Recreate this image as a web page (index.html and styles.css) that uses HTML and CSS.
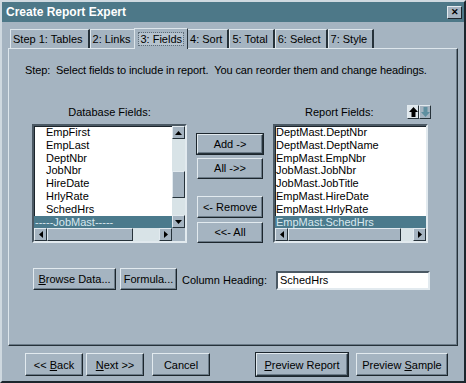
FILE: index.html
```html
<!DOCTYPE html>
<html lang="en">
<head>
    <meta charset="UTF-8">
    <title>Create Report Expert</title>
    <link rel="stylesheet" href="styles.css">
</head>
<body>
<div class="window">

    <!-- Title bar -->
    <div class="titlebar">
        <span>Create Report Expert</span>
        <span class="close">&#x2715;</span>
    </div>

    <!-- Step tabs -->
    <div class="tabs">
        <div class="tab">Step 1: Tables</div>
        <div class="tab">2: Links</div>
        <div class="tab active"><span class="focus">3: Fields</span></div>
        <div class="tab">4: Sort</div>
        <div class="tab">5: Total</div>
        <div class="tab">6: Select</div>
        <div class="tab">7: Style</div>
    </div>

    <div class="panel">
        <p class="hint">Step:&nbsp; Select fields to include in report.&nbsp; You can reorder them and change headings.</p>

        <div class="fields">
            <div class="col-label left-label">Database Fields:</div>
            <div class="col-label right-label">
                <span>Report Fields:</span>
                <span class="order">
                    <span class="order-btn up">
                        <svg width="9" height="10" viewBox="0 0 9 10"><path d="M4.5 0 L9 5 L6.5 5 L6.5 10 L2.5 10 L2.5 5 L0 5 Z" fill="#000"/></svg>
                    </span>
                    <span class="order-btn down">
                        <svg width="9" height="10" viewBox="0 0 9 10"><path d="M4.5 10 L9 5 L6.5 5 L6.5 0 L2.5 0 L2.5 5 L0 5 Z" fill="#5f8fa0"/></svg>
                    </span>
                </span>
            </div>

            <!-- Database fields list -->
            <div class="listbox">
                <div class="list-main">
                    <div class="items">
                        <div class="item sub">EmpFirst</div>
                        <div class="item sub">EmpLast</div>
                        <div class="item sub">DeptNbr</div>
                        <div class="item sub">JobNbr</div>
                        <div class="item sub">HireDate</div>
                        <div class="item sub">HrlyRate</div>
                        <div class="item sub">SchedHrs</div>
                        <div class="item selected">-----JobMast-----</div>
                    </div>
                    <div class="vscroll">
                        <span class="arrow"><svg width="7" height="4" viewBox="0 0 7 4"><path d="M3.5 0 L7 4 L0 4 Z"/></svg></span>
                        <span class="track" style="height: 32px"></span>
                        <span class="thumb" style="height: 27px"></span>
                        <span class="track grow"></span>
                        <span class="arrow"><svg width="7" height="4" viewBox="0 0 7 4"><path d="M0 0 L7 0 L3.5 4 Z"/></svg></span>
                    </div>
                </div>
                <div class="hscroll">
                    <span class="arrow"><svg width="4" height="7" viewBox="0 0 4 7"><path d="M4 0 L4 7 L0 3.5 Z"/></svg></span>
                    <span class="thumb" style="width: 86px"></span>
                    <span class="track grow"></span>
                    <span class="arrow"><svg width="4" height="7" viewBox="0 0 4 7"><path d="M0 0 L4 3.5 L0 7 Z"/></svg></span>
                    <span class="corner"></span>
                </div>
            </div>

            <!-- Move buttons -->
            <div class="moves">
                <button class="btn default">Add -&gt;</button>
                <button class="btn">All -&gt;&gt;</button>
                <button class="btn gap">&lt;- Remove</button>
                <button class="btn">&lt;&lt;- All</button>
            </div>

            <!-- Report fields list -->
            <div class="listbox">
                <div class="list-main">
                    <div class="items">
                        <div class="item">DeptMast.DeptNbr</div>
                        <div class="item">DeptMast.DeptName</div>
                        <div class="item">EmpMast.EmpNbr</div>
                        <div class="item">JobMast.JobNbr</div>
                        <div class="item">JobMast.JobTitle</div>
                        <div class="item">EmpMast.HireDate</div>
                        <div class="item">EmpMast.HrlyRate</div>
                        <div class="item selected">EmpMast.SchedHrs</div>
                    </div>
                </div>
                <div class="hscroll">
                    <span class="arrow"><svg width="4" height="7" viewBox="0 0 4 7"><path d="M4 0 L4 7 L0 3.5 Z"/></svg></span>
                    <span class="thumb" style="width: 113px"></span>
                    <span class="track grow"></span>
                    <span class="arrow"><svg width="4" height="7" viewBox="0 0 4 7"><path d="M0 0 L4 3.5 L0 7 Z"/></svg></span>
                </div>
            </div>
        </div>

        <div class="heading-row">
            <button class="btn browse"><u>B</u>rowse Data...</button>
            <button class="btn formula">Formula...</button>
            <span class="heading-label">Column Heading:</span>
            <div class="textbox">SchedHrs</div>
        </div>
    </div>

    <!-- Wizard buttons -->
    <div class="footer">
        <button class="btn wide">&lt;&lt; <u>B</u>ack</button>
        <button class="btn wide"><u>N</u>ext &gt;&gt;</button>
        <button class="btn wide cancel">Cancel</button>
        <button class="btn preview default"><u>P</u>review Report</button>
        <button class="btn preview">Preview <u>S</u>ample</button>
    </div>

</div>
</body>
</html>
```

FILE: styles.css
```css
body {
    margin: 0;
    padding: 0;
    font-family: "Liberation Sans", Arial, sans-serif;
    font-size: 11px;
    color: #000;
}

/* Dialog frame */
.window {
    width: 466px;
    height: 383px;
    box-sizing: border-box;
    background-color: #a5b4c1;
    border: 2px solid;
    border-color: #cfd9e0 #1c262d #1c262d #cfd9e0;
    display: flex;
    flex-direction: column;
}

.titlebar {
    height: 20px;
    background-color: #4d7888;
    color: #fff;
    font-weight: bold;
    font-size: 12px;
    display: flex;
    align-items: center;
    justify-content: space-between;
    padding: 0 2px 0 4px;
}

.close {
    width: 13px;
    height: 11px;
    background-color: #a5b4c1;
    border: 1px solid;
    border-color: #e2eaef #1c262d #1c262d #e2eaef;
    color: #000;
    font-size: 9px;
    display: flex;
    align-items: center;
    justify-content: center;
}

/* Tabs */
.tabs {
    display: flex;
    align-items: flex-end;
    height: 21px;
    margin: 5px 0 0 8px;
}

.tab {
    height: 19px;
    box-sizing: border-box;
    padding: 0 5px 0 2px;
    border-top: 1px solid #dde6ec;
    border-left: 1px solid #dde6ec;
    border-right: 2px solid #26323a;
    display: flex;
    align-items: center;
}

.tab.active {
    height: 21px;
    padding: 0 4px 0 4px;
    border-right-width: 1px;
    margin: 0 -1px -1px -3px;
    position: relative;
    background-color: #a5b4c1;
}

.focus {
    outline: 1px dotted #5d6c78;
    background-color: #b6c3ce;
    padding: 0 1px;
}

/* Tab page */
.panel {
    height: 298px;
    box-sizing: border-box;
    margin: 0 6px;
    border: 1px solid;
    border-color: #dde6ec #26323a #26323a #dde6ec;
    box-shadow: inset -1px -1px 0 #6b7b88;
    padding: 15px 0 0 16px;
}

.hint {
    margin: 0;
    line-height: 13px;
    letter-spacing: -0.1px;
}

.fields {
    display: grid;
    grid-template-columns: 155px 66px 155px;
    grid-template-rows: 19px 119px;
    column-gap: 10px;
    margin: 28px 0 0 7px;
}

.col-label {
    display: flex;
    align-items: flex-start;
    padding-top: 1px;
}

.left-label {
    grid-column: 1;
    justify-content: center;
}

.right-label {
    grid-column: 3;
    padding-left: 32px;
    justify-content: space-between;
}

.order {
    display: flex;
    margin-right: -3px;
    margin-top: -1px;
}

.order-btn {
    width: 12px;
    height: 14px;
    box-sizing: border-box;
    border: 1px solid;
    border-color: #e2eaef #26323a #26323a #e2eaef;
    display: flex;
    align-items: center;
    justify-content: center;
}

.order-btn.up {
    background-color: #dfe7ec;
}

/* List boxes */
.listbox {
    grid-row: 2;
    box-sizing: border-box;
    background-color: #fff;
    border: 2px solid;
    border-color: #4b5964 #e2eaef #e2eaef #4b5964;
    box-shadow: inset 1px 1px 0 #1c262d;
    display: flex;
    flex-direction: column;
    overflow: hidden;
}

.list-main {
    flex: 1;
    display: flex;
    min-height: 0;
    overflow: hidden;
}

.items {
    flex: 1;
}

.item {
    height: 12.8px;
    line-height: 12.8px;
    padding-left: 1px;
    white-space: nowrap;
}

.item.sub {
    padding-left: 12px;
}

.item.selected {
    background-color: #4b7a8c;
    color: #d8e8ef;
}

.vscroll {
    width: 13px;
    display: flex;
    flex-direction: column;
}

.hscroll {
    height: 13px;
    flex: none;
    display: flex;
}

.arrow {
    width: 13px;
    height: 13px;
    flex: none;
    box-sizing: border-box;
    background-color: #a5b4c1;
    border: 1px solid;
    border-color: #e2eaef #26323a #26323a #e2eaef;
    display: flex;
    align-items: center;
    justify-content: center;
}

.track {
    background-color: #d8e3e7;
    flex: none;
}

.track.grow {
    flex: 1;
}

.thumb {
    flex: none;
    box-sizing: border-box;
    background-color: #a5b4c1;
    border: 1px solid;
    border-color: #e2eaef #26323a #26323a #e2eaef;
}

.vscroll .thumb {
    width: 13px;
}

.corner {
    width: 13px;
    flex: none;
    background-color: #a5b4c1;
}

/* Buttons */
.btn {
    font-family: inherit;
    font-size: 11px;
    color: #000;
    background-color: #a5b4c1;
    height: 22px;
    box-sizing: border-box;
    border: 1px solid;
    border-color: #e2eaef #1c262d #1c262d #e2eaef;
    box-shadow: inset -1px -1px 0 #6b7b88;
    padding: 0;
    margin: 0;
}

.btn.default {
    outline: 1px solid #1c262d;
    outline-offset: 0;
    border-color: #e2eaef #26323a #26323a #e2eaef;
}

.moves {
    grid-row: 2;
    grid-column: 2;
    display: flex;
    flex-direction: column;
    padding-top: 10px;
    gap: 4px;
}

.moves .btn {
    width: 66px;
}

.moves .btn.default {
    height: 20px;
}

.moves .btn.gap {
    margin-top: 13px;
}

.heading-row {
    display: flex;
    align-items: flex-end;
    margin: 25px 0 0 8px;
}

.browse {
    width: 83px;
}

.formula {
    width: 57px;
    margin-left: 4px;
}

.heading-label {
    margin-left: 5px;
    width: 94px;
    line-height: 13px;
    padding-bottom: 3px;
}

.textbox {
    width: 154px;
    height: 19px;
    box-sizing: border-box;
    background-color: #fff;
    border: 2px solid;
    border-color: #4b5964 #e2eaef #e2eaef #4b5964;
    line-height: 15px;
    padding-left: 2px;
}

/* Footer */
.footer {
    display: flex;
    margin: 7px 0 0 23px;
}

.footer .btn {
    height: 23px;
}

.wide {
    width: 58px;
    margin-right: 3px;
}

.cancel {
    margin-left: 5px;
}

.preview {
    width: 92px;
    margin-left: 8px;
}

.preview.default {
    margin-left: 43px;
}
```
